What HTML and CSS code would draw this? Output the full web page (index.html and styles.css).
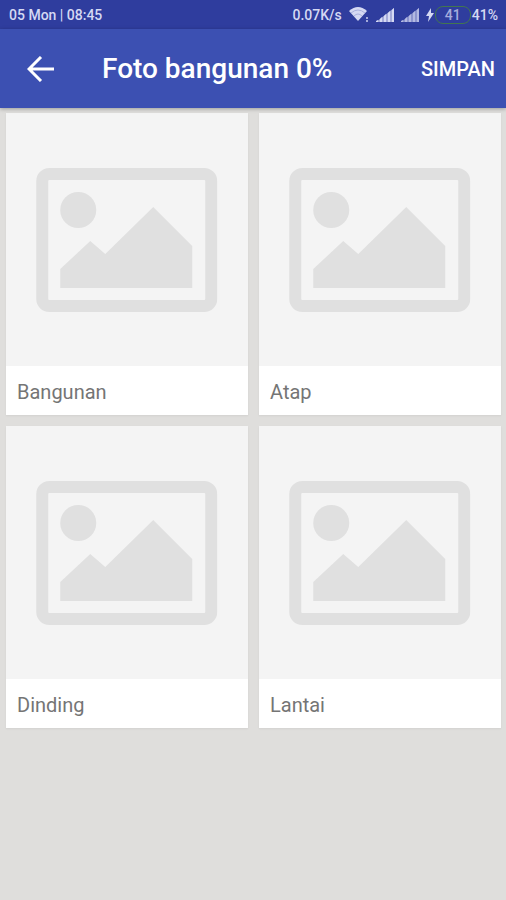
FILE: index.html
```html
<!DOCTYPE html>
<html lang="id">
<head>
    <meta charset="UTF-8">
    <meta name="viewport" content="width=device-width, initial-scale=1.0">
    <title>Foto bangunan</title>
    <link rel="stylesheet" href="styles.css">
</head>
<body>
    <svg class="defs" aria-hidden="true">
        <symbol id="placeholder" viewBox="0 0 181 144">
            <path fill-rule="evenodd" d="M13 0H168A13 13 0 0 1 181 13V131A13 13 0 0 1 168 144H13A13 13 0 0 1 0 131V13A13 13 0 0 1 13 0ZM13 12Q12 12 12 13V131Q12 132 13 132H168Q169 132 169 131V13Q169 12 168 12Z"/>
            <circle cx="42" cy="42" r="18"/>
            <path d="M24 101L54 73L69 86L117 39L156 78V120H24Z"/>
        </symbol>
        <symbol id="signal" viewBox="0 0 18 14">
            <path d="M0 14L18 0V14Z" opacity=".7"/>
            <path d="M0 14V13L2 12V14ZM4 14V11L6 9V14ZM8 14V8L10 6V14ZM12 14V5L14 3V14ZM16 14V2L18 0V14Z"/>
        </symbol>
    </svg>

    <div class="status-bar">
        <span>05 Mon | 08:45</span>
        <div class="status-icons">
            <span>0.07K/s</span>
            <svg class="wifi" viewBox="0 0 20 15" aria-hidden="true">
                <path d="M0 4Q9 -4 18 4L9 14Z"/>
                <path class="wifi-line" d="M2 6Q9 0 16 6M5 9Q9 5 13 9"/>
                <path d="M17 10H19V12H17ZM17 13H19V15H17Z" opacity=".7"/>
            </svg>
            <svg class="signal" aria-hidden="true"><use href="#signal"/></svg>
            <svg class="signal dim" aria-hidden="true"><use href="#signal"/></svg>
            <div class="power">
                <svg class="bolt" viewBox="0 0 8 14" aria-hidden="true"><path d="M5 0L0 8H3L2 14L8 5H5Z"/></svg>
                <span class="battery">41</span>
                <span>41%</span>
            </div>
        </div>
    </div>

    <header class="app-bar">
        <button class="back" type="button" aria-label="Kembali">
            <svg viewBox="0 0 28 26" aria-hidden="true"><path d="M27 13H2M14 1L2 13L14 25"/></svg>
        </button>
        <h1>Foto bangunan 0%</h1>
        <button class="save" type="button">SIMPAN</button>
    </header>

    <main class="photos">
        <figure class="card">
            <div class="photo"><svg aria-hidden="true"><use href="#placeholder"/></svg></div>
            <figcaption>Bangunan</figcaption>
        </figure>
        <figure class="card">
            <div class="photo"><svg aria-hidden="true"><use href="#placeholder"/></svg></div>
            <figcaption>Atap</figcaption>
        </figure>
        <figure class="card">
            <div class="photo"><svg aria-hidden="true"><use href="#placeholder"/></svg></div>
            <figcaption>Dinding</figcaption>
        </figure>
        <figure class="card">
            <div class="photo"><svg aria-hidden="true"><use href="#placeholder"/></svg></div>
            <figcaption>Lantai</figcaption>
        </figure>
    </main>
</body>
</html>
```

FILE: styles.css
```css
* {
    box-sizing: border-box;
}
body {
    margin: 0;
    min-height: 100vh;
    font-family: Roboto, "Liberation Sans", sans-serif;
    background-color: #dfdedc;
}
.defs {
    display: none;
}

/* Status bar */
.status-bar {
    display: flex;
    justify-content: space-between;
    align-items: center;
    height: 29px;
    padding: 0 8px 0 9px;
    font-size: 14px;
    font-weight: 500;
    color: #d5d9f3;
    background-color: #2f3d9e;
}
.status-icons {
    display: flex;
    align-items: center;
    gap: 7px;
}
.status-icons svg {
    display: block;
    fill: #d5d9f3;
}
.wifi {
    width: 20px;
    height: 15px;
}
.status-icons .wifi-line {
    fill: none;
    stroke: #a9b0de;
    stroke-width: 1;
}
.signal {
    width: 18px;
    height: 14px;
}
.dim {
    opacity: 0.8;
}
.power {
    display: flex;
    align-items: center;
    gap: 1px;
}
.bolt {
    width: 8px;
    height: 14px;
}
.battery {
    width: 36px;
    border: 1px solid #42764f;
    border-radius: 8px;
    line-height: 16px;
    text-align: center;
    color: #a5acdd;
}

/* Title bar */
.app-bar {
    position: relative;
    display: flex;
    align-items: center;
    height: 79px;
    padding: 0 11px 0 27px;
    color: #fff;
    background-color: #3c50b2;
    box-shadow: 0 1px 4px rgba(0, 0, 0, 0.3);
}
.app-bar button {
    padding: 0;
    border: none;
    font-family: inherit;
    color: inherit;
    background: none;
    cursor: pointer;
}
.back svg {
    display: block;
    width: 28px;
    height: 26px;
    fill: none;
    stroke: #fff;
    stroke-width: 3;
}
.app-bar h1 {
    flex: 1;
    margin: 0 0 0 47px;
    font-size: 28px;
    font-weight: 500;
}
.app-bar .save {
    font-size: 20px;
    font-weight: 500;
}

/* Photo grid */
.photos {
    display: grid;
    grid-template-columns: repeat(2, 1fr);
    gap: 11px;
    padding: 5px 5px 11px 6px;
}
.card {
    margin: 0;
    background-color: #fff;
    box-shadow: 0 1px 2px rgba(0, 0, 0, 0.06);
}
.photo {
    display: flex;
    justify-content: center;
    align-items: center;
    height: 253px;
    background-color: #f4f4f4;
}
.photo svg {
    width: 75%;
    height: 144px;
    fill: #e0e0e0;
}
.card figcaption {
    padding: 14px 11px 11px;
    font-size: 20px;
    line-height: 24px;
    color: #757575;
}
```
